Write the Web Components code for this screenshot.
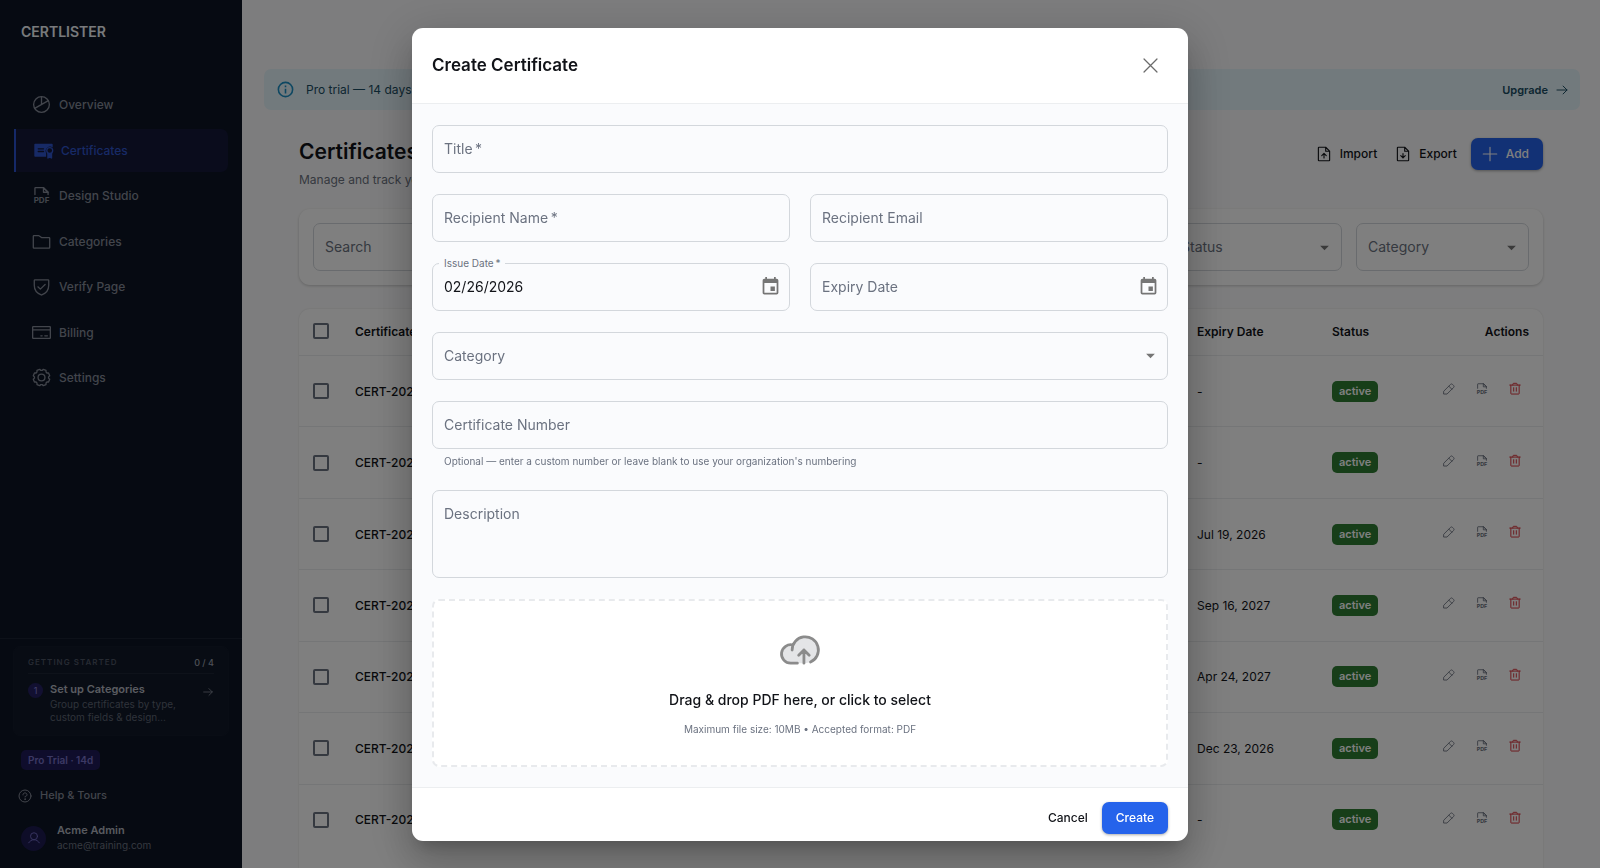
<!DOCTYPE html>
<html lang="en">
<head>
<meta charset="utf-8">
<meta name="viewport" content="width=device-width, initial-scale=1">
<title>Certificates - CertLister</title>
<style>
  body {
    margin: 0;
    height: 100vh;
    overflow: hidden;
    font-family: Inter, "Liberation Sans", sans-serif;
    font-size: 12px;
    color: #111318;
    background: #fbfbfc;
  }
</style>
</head>
<body>
<app-shell>
  <app-sidebar slot="sidebar"></app-sidebar>
  <trial-banner>Pro trial — 14 days left</trial-banner>
  <certificates-page></certificates-page>
</app-shell>
<create-dialog></create-dialog>

<script>
// ICONS
// outline of a gear with eight shallow teeth
const gearPath = () => {
  const points = [];
  for (let tooth = 0; tooth < 8; tooth += 1) {
    [[-17, 86], [-10, 102], [10, 102], [17, 86]].forEach(([offset, radius]) => {
      const angle = (tooth * 45 + 22.5 + offset) * Math.PI / 180;
      points.push(`${Math.round(128 + radius * Math.cos(angle))} ${Math.round(128 + radius * Math.sin(angle))}`);
    });
  }
  return `M${points.join('L')}z`;
};

// line icons are drawn on a 256 grid, filled ones on a 24 grid
const icons = {
  chart: '<circle cx="128" cy="128" r="96"/><path d="M128 32v96M45 176l166-96"/>',
  certificate: '<path fill="currentColor" stroke="none" d="M16 56a10 10 0 0 1 10-10h204a10 10 0 0 1 10 10v36a54 54 0 0 0-80 68v44H26a10 10 0 0 1-10-10z"/><path stroke="#141838" d="M64 108h64M64 140h64"/><circle cx="204" cy="128" r="36"/><path fill="currentColor" d="M182 160v60l22-12 22 12v-60"/>',
  pdf: '<path d="M48 116V40a8 8 0 0 1 8-8h96l56 56v28"/><path d="M152 32v56h56z"/><text x="128" y="224" text-anchor="middle" font-size="98" font-weight="700" fill="currentColor" stroke="none">PDF</text>',
  folder: '<path d="M128 80h92a8 8 0 0 1 8 8v112a8 8 0 0 1-8 8H36a8 8 0 0 1-8-8V64a8 8 0 0 1 8-8h57a8 8 0 0 1 5 2z"/>',
  shield: '<path d="M40 114V56a8 8 0 0 1 8-8h160a8 8 0 0 1 8 8v58c0 84-71 112-85 117a8 8 0 0 1-6 0c-14-5-85-33-85-117z"/><path d="M172 104l-58 56-30-28"/>',
  card: '<rect x="20" y="56" width="216" height="144" rx="8"/><path d="M20 96h216M168 168h32M120 168h16"/>',
  gear: `<circle cx="128" cy="128" r="42"/><path d="${gearPath()}"/>`,
  arrow: '<path d="M36 128h184M148 56l72 72-72 72"/>',
  help: '<circle cx="128" cy="128" r="96"/><path d="M128 144v-8c18 0 32-13 32-29s-14-29-32-29-32 13-32 29v4"/><circle cx="128" cy="178" r="6" fill="currentColor"/>',
  user: '<circle cx="128" cy="96" r="64"/><path d="M31 216c20-34 56-56 97-56s77 22 97 56"/>',
  importFile: '<path d="M200 224H56a8 8 0 0 1-8-8V40a8 8 0 0 1 8-8h96l56 56v128a8 8 0 0 1-8 8zM152 32v56h56"/><path d="M96 152l32-32 32 32M128 184v-64"/>',
  exportFile: '<path d="M200 224H56a8 8 0 0 1-8-8V40a8 8 0 0 1 8-8h96l56 56v128a8 8 0 0 1-8 8zM152 32v56h56"/><path d="M96 152l32 32 32-32M128 184v-64"/>',
  plus: '<path d="M32 128h192M128 32v192"/>',
  close: '<path d="M200 56L56 200M200 200L56 56"/>',
  pencil: '<path d="M36 164L156 44a26 26 0 0 1 36 0l20 20a26 26 0 0 1 0 36L92 220H36zM124 76l56 56"/>',
  trash: '<path d="M224 56H32M104 104v64M152 104v64M204 56v156a8 8 0 0 1-8 8H60a8 8 0 0 1-8-8V56M168 56V40a16 16 0 0 0-16-16h-48a16 16 0 0 0-16 16v16"/>',
  cloud: '<path fill="#e4e5e7" stroke="none" d="M72 208A56 56 0 1 1 86 98A80 80 0 1 1 160 208z"/><path d="M112 208H72a56 56 0 1 1 14-110M80 128a80 80 0 1 1 112 73M120 160l32-32 32 32M152 208v-80"/>',
  info: '<path d="M11 7h2v2h-2zm0 4h2v6h-2zm1-9a10 10 0 1 0 0 20 10 10 0 0 0 0-20m0 18a8 8 0 1 1 0-16 8 8 0 0 1 0 16"/>',
  calendar: '<path d="M17 12h-5v5h5zM16 1v2H8V1H6v2H5a2 2 0 0 0-2 2v14a2 2 0 0 0 2 2h14a2 2 0 0 0 2-2V5a2 2 0 0 0-2-2h-1V1zm3 18H5V8h14z"/>',
  caret: '<path d="M7 10l5 5 5-5z"/>',
};
const filled = ['info', 'calendar', 'caret'];

class UiIcon extends HTMLElement {
  connectedCallback() {
    const name = this.getAttribute('name');
    const solid = filled.includes(name);
    const size = this.getAttribute('size') || 20;
    const weight = this.getAttribute('weight') || 14;
    this.attachShadow({ mode: 'open' }).innerHTML = `
    <style>
      :host { display: inline-flex; flex: none; }
      svg { display: block; font-family: Inter, sans-serif; }
    </style>
    <svg aria-hidden="true" width="${size}" height="${size}" viewBox="${solid ? '0 0 24 24' : '0 0 256 256'}"
      fill="${solid ? 'currentColor' : 'none'}" ${solid ? '' : `stroke="currentColor" stroke-width="${weight}" stroke-linecap="round" stroke-linejoin="round"`}>${icons[name]}</svg>`;
  }
}
customElements.define('ui-icon', UiIcon);


// BUTTON
// variant is text, primary or icon
class UiButton extends HTMLElement {
  connectedCallback() {
    const label = this.getAttribute('label');
    this.attachShadow({ mode: 'open' }).innerHTML = `
    <style>
      :host { display: inline-flex; }
      button {
        display: flex;
        align-items: center;
        gap: 7px;
        height: 32px;
        padding: 0 14px;
        border: 0;
        border-radius: 7px;
        background: none;
        color: inherit;
        font: 500 12px/20px Inter, "Liberation Sans", sans-serif;
        cursor: pointer;
      }
      ::slotted(ui-icon) { margin-left: -4px; }
      :host([variant=text]) button { padding: 0 7px; }
      :host([variant=primary]) button {
        color: #fff;
        background: #2563eb;
        box-shadow: 0 1px 3px #0005;
      }
      :host([variant=icon]) button { height: auto; padding: 6px; }
      :host([variant=icon]) ::slotted(ui-icon) { margin-left: 0; }
    </style>
    <button type="button"${label ? ` aria-label="${label}"` : ''}><slot></slot></button>`;
  }
}
customElements.define('ui-button', UiButton);


// OUTLINED FIELD
// kind is text, date, select or area
class OutlinedField extends HTMLElement {
  connectedCallback() {
    const label = this.getAttribute('label');
    const kind = this.getAttribute('kind') || 'text';
    const value = this.getAttribute('value') || '';
    const helper = this.getAttribute('helper');
    const required = this.hasAttribute('required') ? '&thinsp;*' : '';
    const controls = {
      text: `<input id="control" type="text">`,
      date: `<input id="control" type="text" value="${value}"><ui-button variant="icon" label="Choose date"><ui-icon name="calendar" size="21"></ui-icon></ui-button>`,
      select: `<select id="control"><option value=""></option></select><ui-icon class="caret" name="caret" size="21"></ui-icon>`,
      area: `<textarea id="control" rows="3"></textarea>`,
    };
    this.attachShadow({ mode: 'open' }).innerHTML = `
    <style>
      :host { display: block; min-width: 0; }
      .box {
        position: relative;
        display: flex;
        align-items: center;
        min-height: 48px;
        box-sizing: border-box;
        border: 1px solid #d3d7dc;
        border-radius: 7px;
        color: #757575;
      }
      .area { min-height: 88px; }
      label {
        position: absolute;
        top: 12px;
        left: 11px;
        color: #6b7280;
        font-size: 14px;
        line-height: 21px;
        pointer-events: none;
      }
      label.small {
        top: -8px;
        left: 6px;
        padding: 0 5px;
        background: #fafbfd;
        font-size: 10px;
        line-height: 14px;
      }
      input, select, textarea {
        flex: 1;
        min-width: 0;
        box-sizing: border-box;
        height: 46px;
        padding: 0 11px;
        border: 0;
        outline: 0;
        appearance: none;
        background: none;
        color: #111318;
        font: 14px/21px Inter, "Liberation Sans", sans-serif;
      }
      textarea { height: 86px; padding: 12px 11px; resize: none; }
      ui-button { margin-right: 2px; }
      .caret { position: absolute; right: 6px; pointer-events: none; }
      p { margin: 4px 12px 0; color: #6b7280; font-size: 10px; line-height: 16px; }
    </style>
    <div class="box ${kind}">
      ${controls[kind]}
      <label for="control" class="${value ? 'small' : ''}">${label}${required}</label>
    </div>
    ${helper ? `<p>${helper}</p>` : ''}`;
  }
}
customElements.define('outlined-field', OutlinedField);


// APP SHELL
class AppShell extends HTMLElement {
  connectedCallback() {
    this.attachShadow({ mode: 'open' }).innerHTML = `
    <style>
      :host { display: flex; height: 100vh; }
      main { flex: 1; min-width: 0; padding-top: 69px; }
    </style>
    <slot name="sidebar"></slot>
    <main><slot></slot></main>`;
  }
}
customElements.define('app-shell', AppShell);


// SIDEBAR
class NavItem extends HTMLElement {
  connectedCallback() {
    this.attachShadow({ mode: 'open' }).innerHTML = `
    <style>
      :host { display: block; }
      a {
        display: flex;
        align-items: center;
        gap: 7px;
        height: 43px;
        padding-left: 17px;
        border-radius: 7px;
        color: #858b98;
        font-weight: 500;
        text-decoration: none;
      }
      :host([active]) a {
        border-left: 2px solid #2b53d0;
        border-radius: 0 7px 7px 0;
        color: #2f54cc;
        background: #141838;
      }
    </style>
    <a href="#"${this.hasAttribute('active') ? ' aria-current="page"' : ''}><ui-icon name="${this.getAttribute('icon')}" size="21" weight="16"></ui-icon><slot></slot></a>`;
  }
}
customElements.define('nav-item', NavItem);

class AppSidebar extends HTMLElement {
  connectedCallback() {
    this.attachShadow({ mode: 'open' }).innerHTML = `
    <style>
      :host {
        display: flex;
        flex-direction: column;
        flex: none;
        width: 242px;
        background: #0c1424;
        color: #858b98;
      }
      .brand { margin: 22px 21px 0; color: #f1f5f9; font-size: 14px; font-weight: 600; line-height: 20px; }
      nav {
        display: flex;
        flex-direction: column;
        justify-content: space-between;
        height: 316px;
        margin: 41px 14px auto;
      }
      footer { border-top: 1px solid #1b2333; padding: 7px 13px 15px; }
      .card { padding: 9px 14px 11px; border: 1px solid #121a2a; border-radius: 7px; background: #101828; }
      .top {
        display: flex;
        justify-content: space-between;
        padding-bottom: 4px;
        border-bottom: 1px solid #1d2535;
        font-size: 9px;
        line-height: 13px;
        font-weight: 500;
        color: #9aa0ac;
      }
      .top span { color: #4d5464; font-size: 8px; font-weight: 600; letter-spacing: 1px; }
      .step { display: flex; gap: 7px; margin-top: 7px; color: inherit; text-decoration: none; }
      .number {
        flex: none;
        width: 15px;
        height: 15px;
        margin-top: 2px;
        border-radius: 8px;
        background: #252063;
        color: #8a86d8;
        font-size: 9px;
        line-height: 15px;
        text-align: center;
      }
      .step div { flex: 1; font-size: 10px; line-height: 13px; color: #5f6675; }
      .step strong { display: block; color: #b5b9c2; font-size: 11px; font-weight: 600; line-height: 17px; }
      .step ui-icon { margin-top: 5px; }
      .chip {
        display: inline-block;
        margin: 14px 8px 0;
        padding: 0 7px;
        border-radius: 5px;
        background: #1f1b58;
        color: #7872c8;
        font-size: 10px;
        font-weight: 600;
        line-height: 20px;
      }
      .help { display: flex; align-items: center; gap: 7px; margin: 17px 4px 0; color: #858b98; font-size: 11px; font-weight: 500; line-height: 17px; text-decoration: none; }
      .user { display: flex; align-items: center; gap: 11px; margin: 19px 8px 0; font-size: 10px; line-height: 15px; color: #6b7280; }
      .user strong { display: block; color: #b0b5bf; font-size: 11px; font-weight: 600; }
      .avatar { display: grid; place-items: center; width: 25px; height: 25px; border-radius: 50%; background: #1d1a50; color: #6e68c0; }
    </style>
    <div class="brand">CERTLISTER</div>
    <nav>
      <nav-item icon="chart">Overview</nav-item>
      <nav-item icon="certificate" active>Certificates</nav-item>
      <nav-item icon="pdf">Design Studio</nav-item>
      <nav-item icon="folder">Categories</nav-item>
      <nav-item icon="shield">Verify Page</nav-item>
      <nav-item icon="card">Billing</nav-item>
      <nav-item icon="gear">Settings</nav-item>
    </nav>
    <footer>
      <div class="card">
        <div class="top"><span>GETTING STARTED</span>0 / 4</div>
        <a class="step" href="#">
          <span class="number">1</span>
          <div><strong>Set up Categories</strong>Group certificates by type,<br>custom fields &amp; design…</div>
          <ui-icon name="arrow" size="12" weight="18"></ui-icon>
        </a>
      </div>
      <span class="chip">Pro Trial · 14d</span>
      <a class="help" href="#"><ui-icon name="help" size="16" weight="16"></ui-icon>Help &amp; Tours</a>
      <div class="user">
        <span class="avatar"><ui-icon name="user" size="14" weight="18"></ui-icon></span>
        <div><strong>Acme Admin</strong>acme@training.com</div>
      </div>
    </footer>`;
  }
}
customElements.define('app-sidebar', AppSidebar);


// TRIAL BANNER
class TrialBanner extends HTMLElement {
  connectedCallback() {
    this.attachShadow({ mode: 'open' }).innerHTML = `
    <style>
      :host {
        display: flex;
        align-items: center;
        height: 41px;
        box-sizing: border-box;
        margin: 0 20px 0 22px;
        padding: 0 11px 0 12px;
        border-radius: 7px;
        background: #e5f4fa;
        color: #1a4d63;
      }
      ui-icon[name=info] { margin-right: 11px; color: #1a8fc4; }
      a { display: flex; align-items: center; gap: 7px; margin-left: auto; color: inherit; font-size: 11px; font-weight: 600; text-decoration: none; }
    </style>
    <ui-icon name="info" size="19"></ui-icon><slot></slot>
    <a href="#">Upgrade <ui-icon name="arrow" size="14" weight="18"></ui-icon></a>`;
  }
}
customElements.define('trial-banner', TrialBanner);


// CERTIFICATE TABLE
const certificates = [
  { number: 'CERT-2026', expiry: '-' },
  { number: 'CERT-2026', expiry: '-' },
  { number: 'CERT-2026', expiry: 'Jul 19, 2026' },
  { number: 'CERT-2026', expiry: 'Sep 16, 2027' },
  { number: 'CERT-2026', expiry: 'Apr 24, 2027' },
  { number: 'CERT-2026', expiry: 'Dec 23, 2026' },
  { number: 'CERT-2026', expiry: '-' },
];

class CertificateTable extends HTMLElement {
  connectedCallback() {
    const rows = certificates.map(({ number, expiry }) => `
      <tr>
        <td><input type="checkbox" aria-label="Select certificate"></td>
        <td class="name">${number}</td>
        <td>${expiry}</td>
        <td><span class="badge">active</span></td>
        <td class="actions"><div>
          <ui-button variant="icon" label="Edit"><ui-icon name="pencil" size="14" weight="16"></ui-icon></ui-button>
          <ui-button variant="icon" label="Download"><ui-icon name="pdf" size="14" weight="16"></ui-icon></ui-button>
          <ui-button class="delete" variant="icon" label="Delete"><ui-icon name="trash" size="14" weight="18"></ui-icon></ui-button>
        </div></td>
      </tr>`).join('');
    this.attachShadow({ mode: 'open' }).innerHTML = `
    <style>
      :host { display: block; min-height: 600px; border-radius: 11px; background: #fff; box-shadow: 0 0 2px #0002; }
      table { width: 100%; height: 546px; border-collapse: collapse; table-layout: fixed; }
      th, td { padding: 0 14px; border-bottom: 1px solid #eaecee; text-align: left; font-weight: 400; }
      th { height: 44px; padding-bottom: 2px; font-weight: 600; }
      td { height: 70px; }
      tbody tr:last-child td { border-bottom: 0; }
      .check { width: 14px; }
      .expiry { width: 107px; }
      .status { width: 76px; }
      .last { width: 93px; text-align: right; }
      .name { font-weight: 500; }
      input {
        display: block;
        width: 16px;
        height: 16px;
        margin: 0;
        box-sizing: border-box;
        border: 2px solid #6b7280;
        border-radius: 2px;
        appearance: none;
      }
      .badge {
        display: inline-block;
        padding: 0 7px;
        border-radius: 5px;
        background: #2e7d32;
        color: #fff;
        font-size: 11px;
        font-weight: 600;
        line-height: 21px;
      }
      .actions div { display: flex; justify-content: flex-end; gap: 7px; margin-right: 1px; padding-bottom: 4px; color: #6b7280; }
      .delete { color: #d9363e; }
    </style>
    <table>
      <thead>
        <tr>
          <th class="check"><input type="checkbox" aria-label="Select all"></th>
          <th>Certificate</th>
          <th class="expiry">Expiry Date</th>
          <th class="status">Status</th>
          <th class="last">Actions</th>
        </tr>
      </thead>
      <tbody>${rows}</tbody>
    </table>`;
  }
}
customElements.define('certificate-table', CertificateTable);


// PAGE
class CertificatesPage extends HTMLElement {
  connectedCallback() {
    this.attachShadow({ mode: 'open' }).innerHTML = `
    <style>
      :host { display: block; margin: 26px 57px 0; }
      header { display: flex; align-items: center; justify-content: space-between; }
      h1 { margin: 0; font-size: 21px; font-weight: 600; line-height: 31px; }
      header p { margin: 4px 0 0; color: #6b7280; line-height: 18px; }
      .buttons { display: flex; gap: 7px; margin-bottom: 17px; }
      .filters {
        display: grid;
        grid-template-columns: 1fr 173px 173px;
        gap: 14px;
        margin: 20px 0 24px;
        padding: 14px;
        border-radius: 11px;
        background: #fff;
        box-shadow: 0 1px 3px #0003;
      }
    </style>
    <header>
      <div>
        <h1>Certificates</h1>
        <p>Manage and track your certificates</p>
      </div>
      <div class="buttons">
        <ui-button variant="text"><ui-icon name="importFile" size="18" weight="16"></ui-icon>Import</ui-button>
        <ui-button variant="text"><ui-icon name="exportFile" size="18" weight="16"></ui-icon>Export</ui-button>
        <ui-button variant="primary"><ui-icon name="plus" size="18" weight="16"></ui-icon>Add</ui-button>
      </div>
    </header>
    <div class="filters">
      <outlined-field label="Search"></outlined-field>
      <outlined-field label="Status" kind="select"></outlined-field>
      <outlined-field label="Category" kind="select"></outlined-field>
    </div>
    <certificate-table></certificate-table>`;
  }
}
customElements.define('certificates-page', CertificatesPage);


// FILE DROP
class FileDrop extends HTMLElement {
  connectedCallback() {
    this.attachShadow({ mode: 'open' }).innerHTML = `
    <style>
      :host { display: block; }
      button {
        display: flex;
        flex-direction: column;
        align-items: center;
        width: 100%;
        padding: 28px 20px;
        border: 2px dashed #e8eaed;
        border-radius: 7px;
        background: #fff;
        color: #8b8b8b;
        font: 10px/16px Inter, "Liberation Sans", sans-serif;
        cursor: pointer;
      }
      strong { margin: 17px 0 9px; color: #111318; font-size: 14px; font-weight: 500; line-height: 24px; }
      span { color: #6b7280; }
    </style>
    <button type="button">
      <ui-icon name="cloud" size="42" weight="17"></ui-icon>
      <strong>Drag &amp; drop PDF here, or click to select</strong>
      <span>Maximum file size: 10MB • Accepted format: PDF</span>
    </button>`;
  }
}
customElements.define('file-drop', FileDrop);


// CREATE DIALOG
class CreateDialog extends HTMLElement {
  connectedCallback() {
    this.attachShadow({ mode: 'open' }).innerHTML = `
    <style>
      :host {
        position: fixed;
        inset: 0;
        display: grid;
        place-items: center;
        background: rgba(0, 0, 0, .5);
      }
      section {
        width: min(776px, 94vw);
        border-radius: 11px;
        overflow: hidden;
        background: #fff;
        box-shadow: 0 11px 15px -7px #0003, 0 24px 38px 3px #0002, 0 9px 46px 8px #0002;
      }
      header { display: flex; align-items: center; justify-content: space-between; height: 76px; padding: 0 20px; box-sizing: border-box; border-bottom: 1px solid #eceef0; }
      h2 { margin: 0; font-size: 17px; font-weight: 600; line-height: 24px; }
      header ui-button { color: #6b6b6b; }
      form { display: grid; grid-template-columns: 1fr 1fr; gap: 21px 20px; padding: 21px 20px 20px; background: #fafbfd; }
      .wide { grid-column: span 2; }
      footer { display: flex; justify-content: flex-end; gap: 7px; padding: 14px 20px 7px; border-top: 1px solid #eceef0; }
    </style>
    <section role="dialog" aria-modal="true" aria-labelledby="heading">
      <header>
        <h2 id="heading">Create Certificate</h2>
        <ui-button variant="icon" label="Close"><ui-icon name="close" size="23"></ui-icon></ui-button>
      </header>
      <form>
        <outlined-field class="wide" label="Title" required></outlined-field>
        <outlined-field label="Recipient Name" required></outlined-field>
        <outlined-field label="Recipient Email"></outlined-field>
        <outlined-field label="Issue Date" kind="date" value="02/26/2026" required></outlined-field>
        <outlined-field label="Expiry Date" kind="date"></outlined-field>
        <outlined-field class="wide" label="Category" kind="select"></outlined-field>
        <outlined-field class="wide" label="Certificate Number" helper="Optional — enter a custom number or leave blank to use your organization's numbering"></outlined-field>
        <outlined-field class="wide" label="Description" kind="area"></outlined-field>
        <file-drop class="wide"></file-drop>
      </form>
      <footer>
        <ui-button variant="text">Cancel</ui-button>
        <ui-button variant="primary">Create</ui-button>
      </footer>
    </section>`;
  }
}
customElements.define('create-dialog', CreateDialog);
</script>
</body>
</html>
